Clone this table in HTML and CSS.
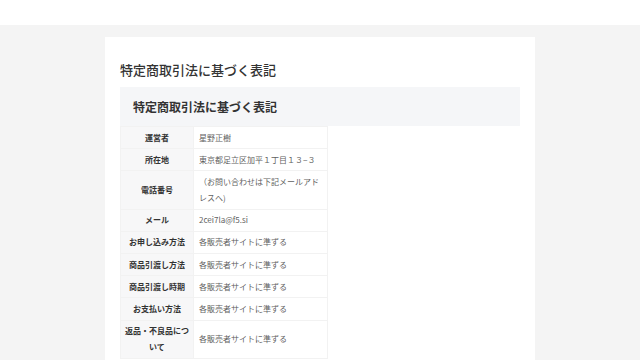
FILE: index.html
```html
<!DOCTYPE html>
<html lang="ja">
<head>
  <meta charset="UTF-8" />
  <link rel="stylesheet" href="styles.css">
</head>
<body>
  <header class="site-header"></header>
  <main class="page">
    <section class="card">
      <h1 class="page-title">特定商取引法に基づく表記</h1>
      <div class="law-box">
        <h2 class="law-heading">特定商取引法に基づく表記</h2>
        <table class="law-table">
          <tr><th>運営者</th><td>星野正樹</td></tr>
          <tr><th>所在地</th><td>東京都足立区加平１丁目１３−３</td></tr>
          <tr><th>電話番号</th><td>（お問い合わせは下記メールアドレスへ)</td></tr>
          <tr><th>メール</th><td>2cei7la@f5.si</td></tr>
          <tr><th>お申し込み方法</th><td>各販売者サイトに準ずる</td></tr>
          <tr><th>商品引渡し方法</th><td>各販売者サイトに準ずる</td></tr>
          <tr><th>商品引渡し時期</th><td>各販売者サイトに準ずる</td></tr>
          <tr><th>お支払い方法</th><td>各販売者サイトに準ずる</td></tr>
          <tr><th>返品・不良品について</th><td>各販売者サイトに準ずる</td></tr>
        </table>
      </div>
    </section>
  </main>
</body>
</html>
```

FILE: styles.css
```css
:root {
  --bg-page: #f4f4f4;
  --bg-soft: #f5f6f8;
  --line: #f2f2f2;
  --text-dark: #333333;
  --text-body: #5f5f5f;
  --font-base: 'Noto Sans CJK JP', 'Noto Sans', sans-serif;
}
*, *::before, *::after { box-sizing: border-box; }
body {
  margin: 0;
  font-family: var(--font-base);
  background: var(--bg-page);
  color: var(--text-dark);
}
.site-header {
  height: 25px;
  background: #ffffff;
}
.page {
  padding-top: 12px;
  display: flex;
  justify-content: center;
}
.card {
  width: 430px;
  background: #ffffff;
  padding: 23px 15px 20px;
}
.page-title {
  margin: 0 0 8px;
  font-size: 13px;
  font-weight: 500;
  line-height: 19px;
  color: var(--text-dark);
}
.law-heading {
  margin: 0;
  background: var(--bg-soft);
  padding: 0 13px;
  height: 39px;
  display: flex;
  align-items: center;
  font-size: 12px;
  font-weight: 700;
  color: var(--text-dark);
}
.law-table {
  width: 208px;
  border-collapse: collapse;
  font-size: 8px;
  line-height: 16px;
}
.law-table th,
.law-table td {
  border: 1px solid var(--line);
  padding: 2.6px 5px;
  vertical-align: middle;
}
.law-table th {
  width: 73px;
  background: #f7f7f8;
  font-weight: 700;
  text-align: center;
  color: var(--text-dark);
  padding: 2.6px 3px;
}
.law-table td {
  text-align: left;
  color: var(--text-body);
}
```
